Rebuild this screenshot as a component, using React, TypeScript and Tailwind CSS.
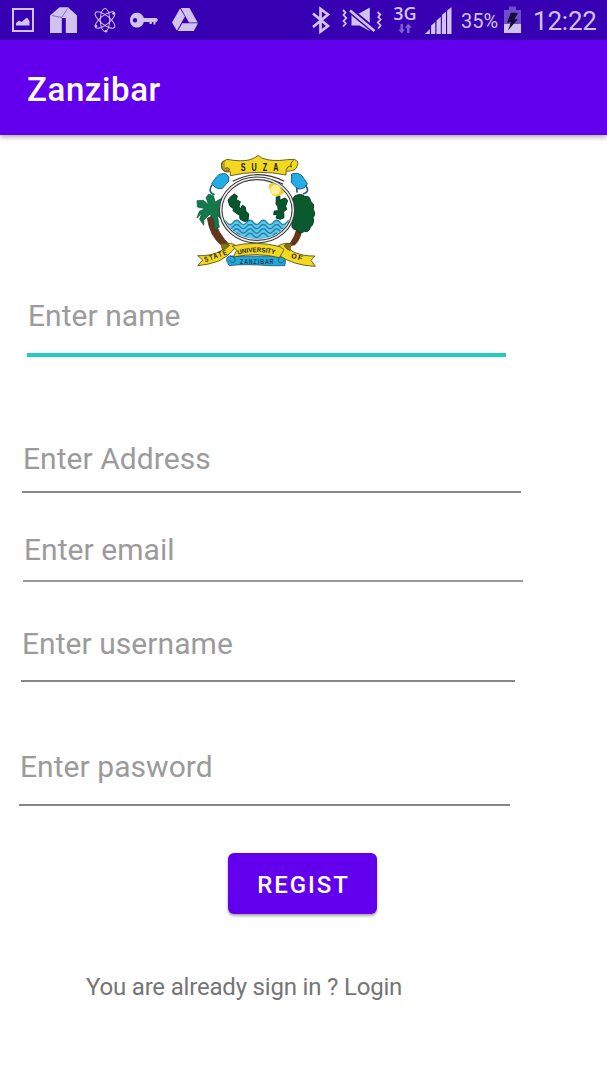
import React from "react";

function LeftIcons() {
  return (
    <div className="flex h-10 items-start pl-3 text-[#d0c3ee]">
      <svg className="h-10 w-[22px]" viewBox="12 0 22 40" fill="currentColor">
        <path fillRule="evenodd" d="M12 8H34V32H12ZM14 10V30H32V10Z" />
        <path d="M16 25.5V23L19 20.5L21.5 22L27 17.5L29.5 21V25.5Z" />
      </svg>
      <svg className="ml-4 h-10 w-[27px]" viewBox="50 0 27 40" fill="currentColor">
        <path d="M50 15.5L59.5 7.2H68L77 15.5V33H65.8V18H61.8V33H50Z" />
        <path fill="none" stroke="#7b5fcb" strokeWidth="0.9" d="M52 15.5L61.8 17.5L67.5 8.5" />
      </svg>
      <svg className="ml-[17px] h-10 w-[22px]" viewBox="94 0 22 40" fill="none" stroke="currentColor" strokeWidth="1">
        <ellipse cx="105" cy="20" rx="4.7" ry="11.6" />
        <ellipse cx="105" cy="20" rx="4.5" ry="12" transform="rotate(52 105 20)" />
        <ellipse cx="105" cy="20" rx="4.5" ry="12" transform="rotate(-52 105 20)" />
        <g fill="currentColor" stroke="none">
          <circle cx="96" cy="26" r="1.3" />
          <circle cx="113.5" cy="13.5" r="1.3" />
          <circle cx="106" cy="31.3" r="1.3" />
        </g>
      </svg>
      <svg className="ml-3.5 h-10 w-7" viewBox="130 0 28 40" fill="currentColor">
        <path fillRule="evenodd" d="M137 12.8C141 12.8 143 15.5 143.8 18H156.5L158 20L156.5 22H155.5V24.5H153.5V22H151.8V24H149.5V22H143.8C143 25 141 27.5 137 27.5C132.5 27.5 130 24 130 20.2S132.5 12.8 137 12.8ZM135 18A2.2 2.2 0 1 0 135 22.4A2.2 2.2 0 1 0 135 18Z" />
      </svg>
      <svg className="ml-3.5 h-10 w-[26px]" viewBox="172 0 26 40" fill="currentColor">
        <path d="M180 8.5L184.9 16.5L176.9 30.7L172 22.6Z" />
        <path d="M180.8 8H189.5L197.7 22.4H189Z" />
        <path d="M182.3 23.2H198L193.8 31H177.8Z" />
      </svg>
    </div>
  );
}

function RightIcons() {
  return (
    <div className="flex h-10 items-start pr-[11px] text-[#d0c3ee]">
      <svg className="h-10 w-[19px]" viewBox="312 0 19 40" fill="none" stroke="currentColor" strokeWidth="2.7">
        <path d="M313 13.5L328 26L320.5 31.5V9L328 14.5L313 27" />
      </svg>
      <svg className="ml-[11px] h-10 w-10" viewBox="342 0 40 40" fill="none" stroke="currentColor">
        <path strokeWidth="1.8" d="M343 10l2.5 2.5-2 2.5 2.8 3-2.8 3 2.3 2.5-2.8 3M377.5 12l2.8 2.5-2 2.5 2.3 2.5-2.8 3 2.8 3-2.5 3" />
        <path fill="currentColor" stroke="none" d="M351.5 13.5H359L369.8 7.5V31L359.5 25.5H351.5Z" />
        <path stroke="#3700b3" strokeWidth="6" d="M349 9.5L375 31" />
        <path strokeWidth="2.8" d="M350 10.5L374.5 31" />
      </svg>
      <div className="ml-[11px] flex w-6 flex-col items-center pt-[3px]">
        <span className="font-['Open_Sans',sans-serif] text-[18px] leading-5 font-semibold">3G</span>
        <svg className="h-[11px] w-3.5 text-[#8061cf]" viewBox="0 0 14 11" fill="currentColor">
          <path d="M2.5 1H5V6.5H7L3.7 10.5L.3 6.5H2.5ZM9 10H11.5V4.7H13.7L10.2 .5L7 4.7H9Z" />
        </svg>
      </div>
      <svg className="ml-2 h-10 w-[27px]" viewBox="425 0 27 40" fill="currentColor">
        <path d="M425 34L429.8 29V34ZM431.1 34V25.5L435.3 22V34ZM436.5 34V20.5L440.8 16.8V34ZM441.9 34V15L446 11.5V34ZM447.1 34V10.5L451.5 7V34Z" />
      </svg>
      <span className="ml-[9px] w-[38px] text-[20px] leading-[42px] whitespace-nowrap">35%</span>
      <svg className="ml-[5px] h-10 w-[17px]" viewBox="504 0 17 40">
        <path fill="#6e4dca" d="M504 10H509V6.5H516V10H521V25H504Z" />
        <path fill="#d0c3ee" d="M504 24H521V33H504Z" />
        <path fill="#170b3b" d="M511 12.5L518 13L514.5 19.5L518 19L508 30.5L511 22L507 22.5Z" />
      </svg>
      <span className="ml-3 w-[63px] text-[26px] leading-[43px] tracking-[-0.2px] whitespace-nowrap">12:22</span>
    </div>
  );
}

function Emblem() {
  const scroll = { fill: "#f2d91f", stroke: "#514611", strokeWidth: 2.5 };
  const water = "q10 -13 20 0t20 0t20 0t20 0t20 0t20 0t20 0t20 0t20 0t20 0t20 0";
  return (
    <svg className="ml-[190px] mt-[15px] h-[122px] w-[132px] shrink-0" viewBox="0 0 396 366" fontFamily="Liberation Sans, sans-serif" fontWeight="700">
      <defs>
        <clipPath id="lake">
          <ellipse cx="201" cy="180" rx="102" ry="88" />
        </clipPath>
        <path id="arc" d="M144 314Q200 298 262 315" />
      </defs>
      <g fill="none" stroke="#333" strokeWidth="3.4">
        <path d="M128 94Q204 54 283 94M132 103Q204 65 280 103" />
      </g>
      <g stroke="#235f83" strokeWidth="3" fill="#22aee4">
        <path d="M80 80Q90 68 109 72Q120 80 116 94L96 116Q77 118 65 101Z" />
        <path d="M305 72Q326 66 336 78L352 101Q346 118 323 117L304 98Z" />
        <path fill="none" strokeWidth="5" d="M66 104Q52 128 74 134M346 106Q362 126 339 132M320 112L321 128" />
      </g>
      <path d="M52 205Q59 258 96 288L124 290Q80 250 70 196Z" fill="#67351b" stroke="#392312" strokeWidth="2" />
      <path fill="#13784b" stroke="#0b573a" strokeWidth="2" d="M60 192L42 211L41 226L29 208L35 190L21 204L28 184L45 176L22 171L21 152L40 151L56 164L48 143L56 132L71 138L75 156L96 144L109 154L100 164L81 170L106 175L109 190L92 181L99 207L87 202L82 194L88 232L74 238L72 213Z" />
      <path d="M289 290Q320 260 318 225L339 221Q338 262 315 286Z" fill="#67351b" />
      <path fill="#0a5a2e" stroke="#063c22" strokeWidth="3" d="M313 139Q331 128 344 139Q361 137 361 153Q376 165 369 177Q379 192 369 203Q375 218 361 232Q356 249 343 244Q329 255 319 239Q303 239 306 221Q295 210 309 198Q301 183 310 175Q300 159 313 139Z" />
      <ellipse cx="201" cy="180" rx="109" ry="95" fill="white" stroke="#3d3d3d" strokeWidth="11" />
      <ellipse cx="201" cy="180" rx="109" ry="95" fill="none" stroke="#f0f0f0" strokeWidth="4.5" />
      <g clipPath="url(#lake)">
        <path d={`M90 217${water}V290H90Z`} fill="#69c4e6" />
        <g fill="none" stroke="#1589b3" strokeWidth="4.5">
          <path d={`M90 217${water}M90 230${water}M90 243${water}M90 256${water}`} />
        </g>
      </g>
      <path d="M236 104Q248 92 271 110L283 127Q269 143 251 137Q237 128 236 104Z" fill="#f4cc31" />
      <circle cx="256" cy="119" r="15" fill="#fff09b" />
      <path fill="#07562e" stroke="#053d22" strokeWidth="3" d="M122 140L133 132L142 138L139 149L151 155L147 169L151 177L157 166L165 170L168 184L176 192L174 211L164 215L150 207L149 196L138 189L129 182L130 176L119 167L114 150Z" />
      <path fill="#07562e" stroke="#053d22" strokeWidth="3" d="M259 141L270 139L269 151L285 144L293 151L287 169L290 178L281 185L282 203L271 208L258 204L262 194L251 194L253 183L265 182L263 169L258 162Z" />
      <g {...scroll} strokeLinejoin="round">
        <path d="M105 33Q104 25 130 31Q174 36 194 23L205 16L215 24Q245 36 292 29L313 28Q328 34 322 47Q319 64 288 64L288 75Q206 58 121 77L121 65L108 66Q90 61 96 37Z" />
        <path fill="#bb9e19" d="M104 32Q91 34 96 55Q106 70 120 59Q114 49 105 55M311 31Q298 39 305 51Q292 44 288 62" />
      </g>
      <text transform="translate(152 64) scale(.72 1)" fontSize="30" textLength="157" lengthAdjust="spacing" fill="#16150b">SUZA</text>
      <g fill="#20a7dc" stroke="#22536f" strokeWidth="2.5">
        <path d="M118 318Q101 326 118 347Q158 341 238 347L284 347Q291 327 277 318Q196 319 118 318Z" />
        <path fill="none" d="M120 318Q140 321 134 335Q122 343 119 330M279 318Q260 323 267 337Q280 342 282 330" />
      </g>
      <text transform="translate(150 342) scale(.65 1)" fontSize="24" textLength="154" lengthAdjust="spacing" fill="#173c4d">ZANZIBAR</text>
      <g {...scroll} strokeLinejoin="round">
        <path d="M23 317Q64 319 96 301Q113 287 91 281Q127 276 139 288L128 302Q111 321 86 333Q53 345 23 347L38 330Z" />
        <path d="M264 289Q276 277 305 281Q291 290 305 303Q335 319 375 318L363 331L376 349Q310 346 270 318Z" />
        <path d="M127 288Q199 271 270 290L282 299L268 323Q203 306 130 321L140 301Z" />
        <path fill="#886f18" d="M91 281Q109 278 119 286Q111 296 96 300M305 281Q289 279 282 287Q290 299 301 302" />
      </g>
      <text transform="translate(46 337) rotate(-20) scale(.8 1)" fontSize="22" textLength="88" fill="#282411">STATE</text>
      <text fontSize="20" fill="#282411" fontFamily="Liberation Sans Narrow, Liberation Sans, sans-serif">
        <textPath href="#arc" textLength="112" lengthAdjust="spacingAndGlyphs">UNIVERSITY</textPath>
      </text>
      <text transform="translate(302 323) rotate(15)" fontSize="21" textLength="34" fill="#282411">OF</text>
    </svg>
  );
}

function Field({ label, box }: { label: string; box: string }) {
  return (
    <label className={`flex shrink-0 flex-col pl-px text-[30px] leading-9 tracking-[0.05px] text-[#9b9b9b] ${box}`}>
      <span className="whitespace-nowrap">{label}</span>
    </label>
  );
}

export default function App() {
  return (
    <main className="flex h-[1080px] w-[607px] flex-col overflow-hidden bg-white font-[Roboto,sans-serif]">
      <header className="shrink-0 shadow-[0_2px_5px_rgba(0,0,0,0.35)]">
        <div className="flex h-10 justify-between bg-[#3700b3]">
          <LeftIcons />
          <RightIcons />
        </div>
        <div className="flex h-[95px] items-center bg-[#6200ee] pl-[27px] pt-1">
          <h1 className="text-[33px] font-medium tracking-[0.6px] text-white">Zanzibar</h1>
        </div>
      </header>
      <Emblem />
      <form className="flex flex-col items-start">
        <Field label="Enter name" box="ml-[27px] mt-[26px] h-[59px] w-[479px] border-b-4 border-[#23cdbc]" />
        <Field label="Enter Address" box="ml-[22px] mt-[84px] h-[52px] w-[499px] border-b-2 border-[#878787]" />
        <Field label="Enter email" box="ml-[23px] mt-[39px] h-[50px] w-[500px] border-b-2 border-[#979797]" />
        <Field label="Enter username" box="ml-[21px] mt-[44px] h-[56px] w-[494px] border-b-2 border-[#878787]" />
        <Field label="Enter pasword" box="ml-[19px] mt-[67px] h-[57px] w-[491px] border-b-2 border-[#878787]" />
        <button type="button" className="ml-[228px] mt-[47px] h-[61px] w-[149px] rounded-[6px] bg-[#6200ee] pt-0.5 pl-0.5 text-[24px] font-medium tracking-[1.9px] text-white shadow-[0_2px_3px_rgba(0,0,0,0.35)]">
          REGIST
        </button>
        <p className="ml-[86px] mt-[57px] text-[24px] leading-8 tracking-[-0.19px] whitespace-nowrap text-[#757575]">You are already sign in ? Login</p>
      </form>
    </main>
  );
}
